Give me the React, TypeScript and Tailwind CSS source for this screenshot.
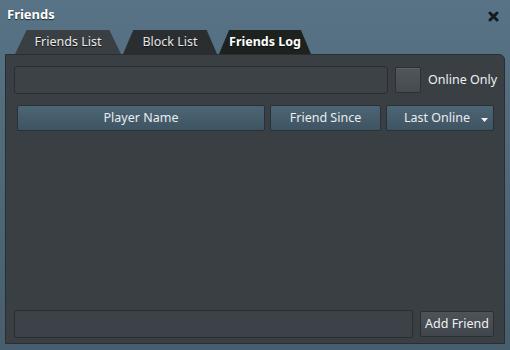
import { useState } from "react";

const tabs = [
  { label: "Friends List", bg: "bg-[#3a3f44]", text: "text-[#e8ecef]", w: "w-[106px]" },
  { label: "Block List", bg: "bg-[#2b2e31]", text: "text-[#e4e7ea]", w: "w-[94px]" },
  { label: "Friends Log", bg: "bg-[#1d221f]", text: "text-white font-bold", w: "w-[92px]" },
];

const App = () => {
  const [onlineOnly, setOnlineOnly] = useState(false);

  return (
    <div className="w-[510px] h-[350px] flex flex-col bg-gradient-to-b from-[#587386] to-[#465e6e] font-['Noto_Sans',sans-serif] text-[12.5px] text-[#e9edf0] select-none overflow-hidden">
      {/* Title bar */}
      <div className="h-[29px] flex items-center justify-between pl-[7px] pr-[11px] pt-[1px]">
        <span className="font-bold text-[13px] text-white [text-shadow:0_1px_1px_#1c2a33]">Friends</span>
        <svg width="11" height="11" viewBox="0 0 11 11" className="mt-[3px]">
          <path d="M2 2 L9 9 M9 2 L2 9" stroke="#161a1d" strokeWidth="3" strokeLinecap="round" />
        </svg>
      </div>

      {/* Tabs */}
      <div className="h-[25px] flex items-end pl-[15px] gap-[2px]">
        {tabs.map((t) => (
          <div
            key={t.label}
            className={`${t.w} h-[24px] ${t.bg} ${t.text} flex items-center justify-center rounded-t-[6px] [clip-path:polygon(11%_0,89%_0,100%_100%,0_100%)] [text-shadow:0_1px_1px_#111]`}
          >
            <span className="text-[12.5px] leading-none pt-[1px] whitespace-nowrap">{t.label}</span>
          </div>
        ))}
      </div>

      {/* Panel */}
      <div className="flex-1 mx-[5px] mb-[6px] bg-[#3a3f44] border border-[#2a2e32] rounded-tr-[6px] flex flex-col pt-[11px] pl-[8px] pr-[8px] pb-[4px]">
        {/* Search row */}
        <div className="flex items-center h-[28px]">
          <input className="w-[374px] shrink-0 h-[28px] bg-[#3c4247] border border-[#2a2e32] rounded-[3px] outline-none px-2 text-[12.5px]" />
          <button
            onClick={() => setOnlineOnly(!onlineOnly)}
            className="ml-[7px] shrink-0 w-[26px] h-[26px] rounded-[2px] bg-gradient-to-b from-[#50565c] to-[#464b51] border border-[#2c3035] shadow-[inset_0_1px_0_#5c6268]"
          />
          <span className="ml-[7px] shrink-0 whitespace-nowrap text-[#eef1f3]">Online Only</span>
        </div>

        {/* Column headers */}
        <div className="flex items-center mt-[11px] pl-[3px] gap-[5px] h-[26px]">
          <div className="w-[248px] h-[26px] flex items-center justify-center rounded-[2px] bg-gradient-to-b from-[#4c6574] to-[#3f5462] border border-[#283038]">
            Player Name
          </div>
          <div className="w-[111px] h-[26px] flex items-center justify-center rounded-[2px] bg-gradient-to-b from-[#4c6574] to-[#3f5462] border border-[#283038]">
            Friend Since
          </div>
          <div className="w-[108px] h-[26px] flex items-center justify-center relative rounded-[2px] bg-gradient-to-b from-[#4c6574] to-[#3f5462] border border-[#283038]">
            <span className="pr-[6px]">Last Online</span>
            <svg width="7" height="4" viewBox="0 0 7 4" className="absolute right-[5px] top-[12px]">
              <path d="M0 0 L7 0 L3.5 4 Z" fill="#f0f2f4" />
            </svg>
          </div>
        </div>

        <div className="flex-1" />

        {/* Bottom row */}
        <div className="flex items-center h-[28px] mb-[1px]">
          <input className="w-[399px] shrink-0 h-[28px] bg-[#3c4247] border border-[#2a2e32] rounded-[3px] outline-none px-2 text-[12.5px]" />
          <button className="ml-[7px] shrink-0 w-[74px] h-[26px] rounded-[2px] bg-gradient-to-b from-[#4d5359] to-[#41464c] border border-[#2b2f34] text-[#eef1f3]">
            Add Friend
          </button>
        </div>
      </div>
    </div>
  );
};

export default App;
